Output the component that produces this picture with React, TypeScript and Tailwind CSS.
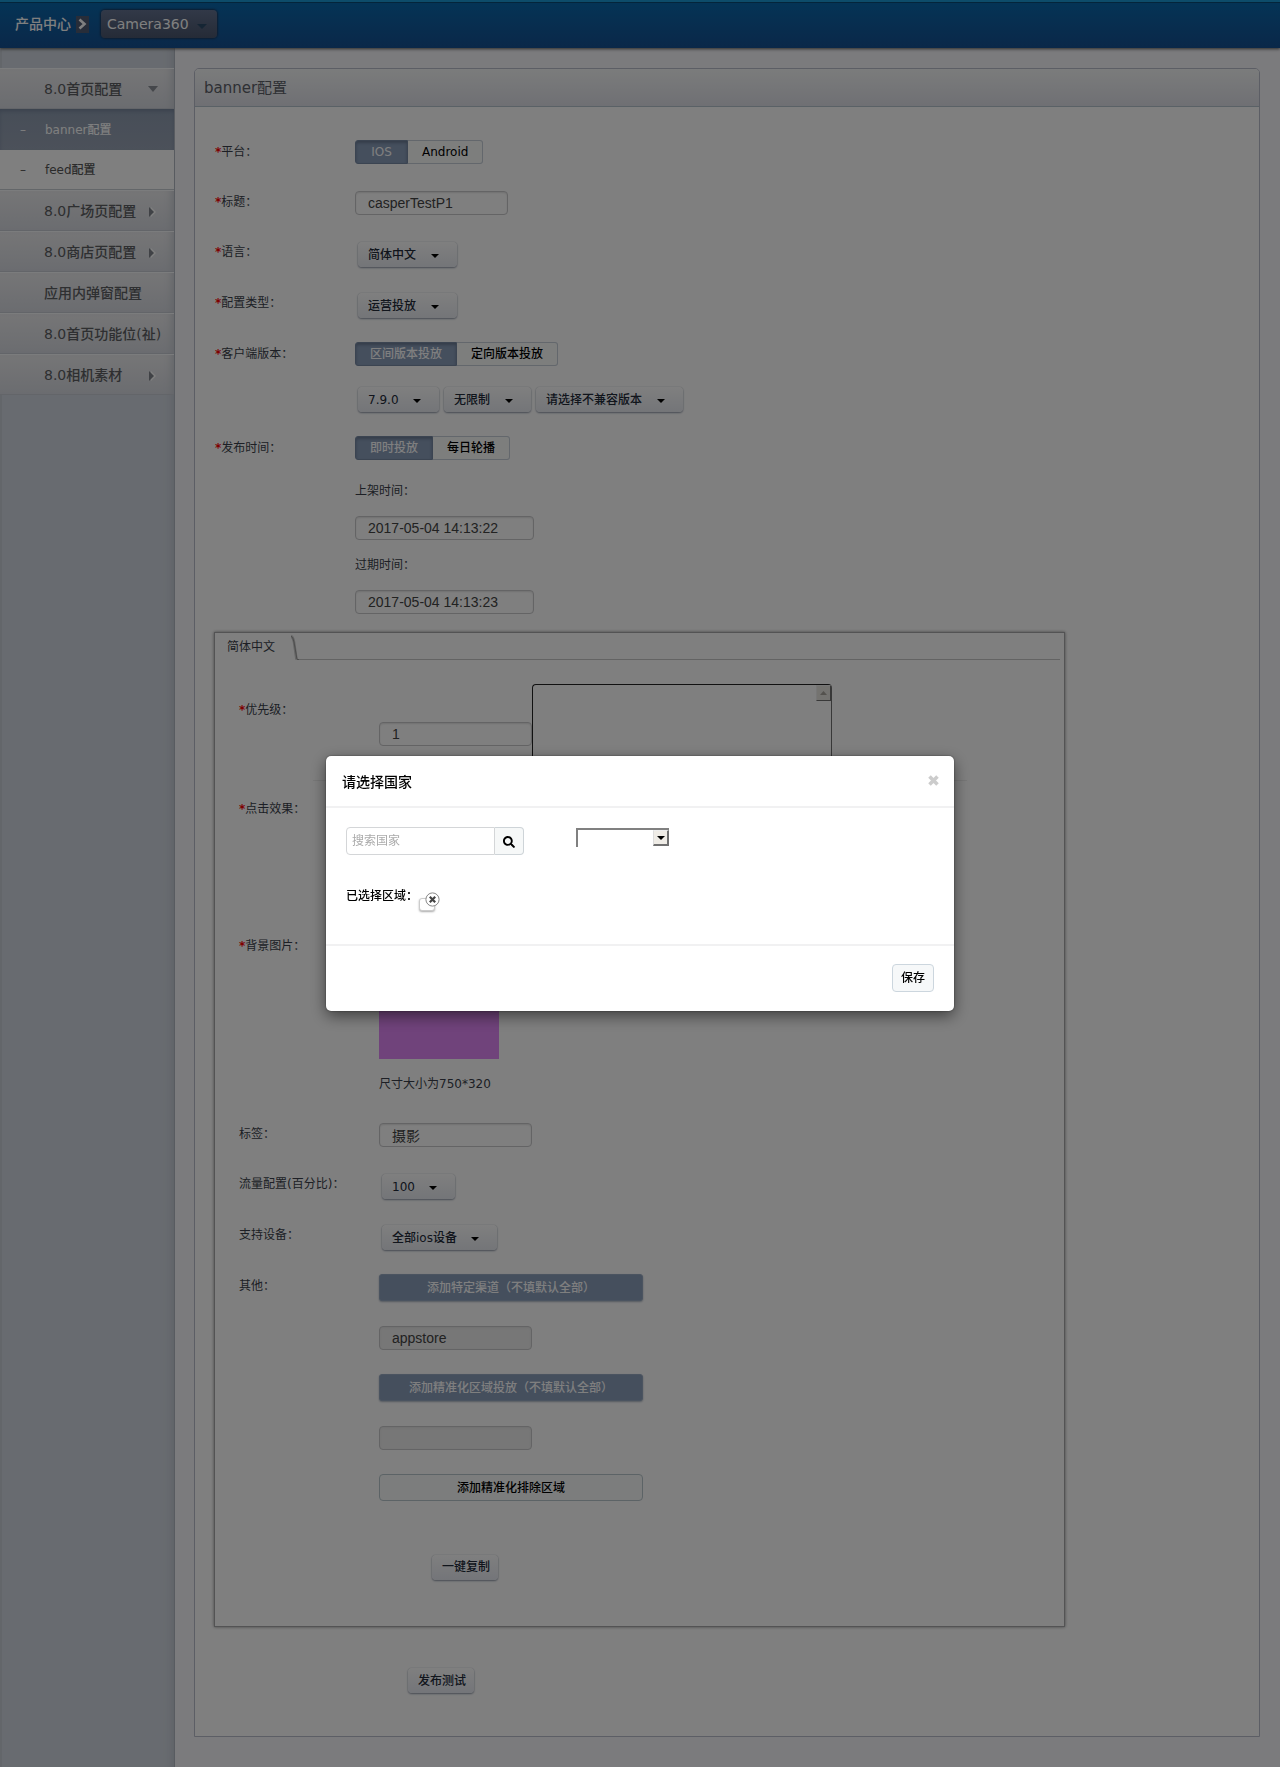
import { useId } from "react";
import type { ReactNode } from "react";
import { FaSearch } from "react-icons/fa";

const noop = () => {};

function Caret({ className = "" }: { className?: string }) {
  return (
    <svg width="8" height="4" viewBox="0 0 8 4" aria-hidden="true" className={className}>
      <path d="M0 0h8L4 4z" fill="currentColor" />
    </svg>
  );
}

function DropDown({ value, label }: { value: string; label: string }) {
  return (
    <div className="relative mt-[2px] mr-[2px] ml-[3px] flex w-fit">
      <select
        aria-label={label}
        className="h-[25px] cursor-pointer appearance-none rounded-[4px] bg-linear-to-b from-white to-[#e8ebf1] pr-[40px] pl-[10px] text-[12px] font-medium text-[#222a38] shadow-[0_0_1px_#a4abb8,0_1px_2px_#8e97a6]"
      >
        <option>{value}</option>
      </select>
      <Caret className="pointer-events-none absolute top-[12px] right-[18px] text-black" />
    </div>
  );
}

function Toggle({ on, off }: { on: string; off: string }) {
  return (
    <div className="flex h-6 text-[12px] font-medium">
      <button
        type="button"
        aria-pressed="true"
        className="min-w-[53px] rounded-l-[3px] border border-[#7688a2] bg-[#8a9ebb] px-[14px] text-white shadow-[inset_0_2px_3px_#6a7a92]"
      >
        {on}
      </button>
      <button
        type="button"
        aria-pressed="false"
        className="rounded-r-[3px] border border-l-0 border-[#c6ced8] bg-[#fafcfb] px-[14px] text-black"
      >
        {off}
      </button>
    </div>
  );
}

function TextBox({
  value,
  wide,
  off,
  label,
  id,
}: {
  value: string;
  wide?: boolean;
  off?: boolean;
  label?: string;
  id?: string;
}) {
  return (
    <input
      type="text"
      id={id}
      aria-label={label}
      value={value}
      onChange={noop}
      disabled={off}
      className={`block h-6 rounded-[4px] border border-[#c8c8ca] px-3 font-['Liberation_Sans','Noto_Sans_CJK_SC',sans-serif] text-[14px] text-[#444] shadow-[inset_0_1px_2px_#e2e2e2] ${
        wide ? "w-[179px]" : "w-[153px]"
      } ${off ? "bg-[#eee]" : "bg-white"}`}
    />
  );
}

function Star() {
  return <span className="font-bold text-[#f00]">*</span>;
}

function Row({
  label,
  required,
  htmlFor,
  children,
}: {
  label: string;
  required?: boolean;
  htmlFor?: string;
  children?: ReactNode;
}) {
  return (
    <div className="mb-6 flex min-h-[26px]">
      <label htmlFor={htmlFor} className="w-[140px] shrink-0 pt-[2px] text-[12px] leading-5">
        {required && <Star />}
        {label}：
      </label>
      <div>{children}</div>
    </div>
  );
}

function GlossButton({ children }: { children: ReactNode }) {
  return (
    <button
      type="button"
      className="h-[25px] rounded-[4px] bg-linear-to-b from-white to-[#e8ebf3] pr-2 pl-[10px] text-[12px] font-medium text-[#222a38] shadow-[0_0_1px_#a4abb8,0_1px_2px_#8e97a6]"
    >
      {children}
    </button>
  );
}

function BlueButton({ children }: { children: ReactNode }) {
  return (
    <button
      type="button"
      className="block h-[27px] w-[264px] rounded-[3px] border border-[#96a8c0] bg-[#8a9ebb] text-center text-[12px] font-medium text-white shadow-[0_1px_2px_#a8b2c0]"
    >
      {children}
    </button>
  );
}

type Arrow = "down" | "right" | "none";

function MenuItem({ text, arrow }: { text: string; arrow: Arrow }) {
  return (
    <a
      href="#"
      className="flex h-[41px] items-center border-t border-[#f6f8fa] bg-linear-to-b from-[#ececee] to-[#d6d9e0] pl-11 text-[14px] font-medium whitespace-nowrap text-[#5c5e62] shadow-[inset_-8px_0_8px_-6px_#c4c8d0,inset_0_-1px_0_#c6cad2]"
    >
      <span className={arrow === "none" ? "" : "w-[104px]"}>{text}</span>
      {arrow === "down" && (
        <svg width="10" height="6" viewBox="0 0 10 6" aria-hidden="true">
          <path d="M0 0h10L5 6z" fill="#8a8f96" />
        </svg>
      )}
      {arrow === "right" && (
        <svg width="8" height="10" viewBox="0 0 8 10" aria-hidden="true" className="mt-[2px] ml-px">
          <path d="M2 0l5 5-5 5z" fill="#fff" />
          <path d="M0 0l5 5-5 5z" fill="#80858c" />
        </svg>
      )}
    </a>
  );
}

function Sidebar() {
  return (
    <nav className="w-[175px] shrink-0 border-r border-[#b0b6c0] bg-[#d1d7e0] pt-5 shadow-[inset_2px_0_0_#c6ccd4,inset_-8px_0_8px_-6px_#bcc2cc]">
      <MenuItem text="8.0首页配置" arrow="down" />
      <a
        href="#"
        className="flex h-[41px] items-center bg-linear-to-b from-[#8e9cb0] to-[#98a2b4] text-[12px] font-medium text-white shadow-[inset_0_3px_4px_-1px_#74829a]"
      >
        <span className="w-[45px] pl-5">–</span>
        banner配置
      </a>
      <a
        href="#"
        className="flex h-10 items-center border-b border-[#c6ccd2] bg-white text-[12px] font-medium text-[#555]"
      >
        <span className="w-[45px] pl-5">–</span>
        feed配置
      </a>
      <MenuItem text="8.0广场页配置" arrow="right" />
      <MenuItem text="8.0商店页配置" arrow="right" />
      <MenuItem text="应用内弹窗配置" arrow="none" />
      <MenuItem text="8.0首页功能位(祉)" arrow="none" />
      <MenuItem text="8.0相机素材" arrow="right" />
    </nav>
  );
}

function TopBar() {
  return (
    <header className="relative z-10 flex h-12 items-center border-t-2 border-[#1a98d4] bg-linear-to-b from-[#0868ac] to-[#145092] pb-[2px] pl-[15px] shadow-[inset_0_1px_0_#084a76,0_1px_3px_#555]">
      <span className="text-[14px] font-medium text-white">产品中心</span>
      <span className="ml-[5px] flex h-[17px] w-[13px] items-center justify-center bg-[#4e5a72]">
        <svg width="9" height="12" viewBox="0 0 9 12" aria-hidden="true">
          <path d="M1.500 1.500L6.500 6L1.500 10.500" fill="none" stroke="#fff" strokeWidth="2.600" />
        </svg>
      </span>
      <div className="relative ml-3 flex">
        <select
          aria-label="产品"
          className="h-7 appearance-none rounded-[4px] bg-linear-to-b from-[#647290] to-[#4a566e] pr-[28px] pl-[6px] text-[14px] text-white shadow-[0_0_2px_1px_#1a3a60]"
        >
          <option>Camera360</option>
        </select>
        <svg
          width="10"
          height="5"
          viewBox="0 0 10 5"
          aria-hidden="true"
          className="pointer-events-none absolute top-[14px] right-[10px]"
        >
          <path d="M0 0h10L5 5z" fill="#2a4a68" />
        </svg>
      </div>
    </header>
  );
}

function LanguagePanel() {
  const priority = useId();
  const tag = useId();
  return (
    <section className="mt-[18px] ml-[19px] w-4/5 border border-[#a6a6a8] pb-[46px] shadow-[0_0_3px_#888]">
      <div className="flex h-[27px]">
        <button type="button" className="pr-4 pl-3 text-[12px] text-[#3a3f4a]">
          简体中文
        </button>
        <svg width="8" height="27" viewBox="0 0 8 27" aria-hidden="true">
          <path d="M0 3Q2 4 3 9L5.500 26.500" fill="none" stroke="#cccccc" strokeWidth="2.600" />
          <path d="M0 3Q2 4 3 9L6 26.500H8" fill="none" stroke="#9a9a9a" strokeWidth="1" />
        </svg>
        <span className="mr-1 grow border-b border-[#c6c6c6]" />
      </div>

      <div className="pt-6 pl-6">
        <div className="flex pb-5">
          <label htmlFor={priority} className="w-[140px] shrink-0 pt-4 text-[12px] leading-5">
            <Star />
            优先级：
          </label>
          <div className="pt-[38px]">
            <TextBox id={priority} value="1" />
          </div>
          <div className="relative h-[76px] w-[300px] rounded-[4px] border border-[#222] border-r-[#707070] bg-white">
            <textarea aria-label="备注" className="block h-full w-full resize-none bg-transparent" />
            <button
              type="button"
              aria-label="向上滚动"
              className="absolute top-0 right-0 flex h-4 w-[15px] items-center justify-center border border-t-[#eee] border-r-[#707070] border-b-[#707070] border-l-[#eee] bg-[#e8e6e0]"
            >
              <svg width="7" height="4" viewBox="0 0 7 4" aria-hidden="true">
                <path d="M0 4L3.500 0L7 4z" fill="#a8a49c" />
              </svg>
            </button>
          </div>
        </div>
        <hr className="mr-[97px] ml-[74px] border-[#eee]" />
        <div className="pt-[18px] text-[12px] leading-5">
          <p>
            <Star />
            点击效果：
          </p>
          <p className="mt-[117px]">
            <Star />
            背景图片：
          </p>
        </div>
        <div className="mt-[52px] mb-[28px] ml-[140px]">
          <div className="h-[51px] w-[120px] bg-[#e086f6]" role="img" aria-label="背景图片" />
          <p className="mt-[15px] text-[12px] leading-5">尺寸大小为750*320</p>
        </div>
        <Row label="标签" htmlFor={tag}>
          <div className="pt-px">
            <TextBox id={tag} value="摄影" />
          </div>
        </Row>
        <Row label="流量配置(百分比)">
          <DropDown label="流量配置(百分比)" value="100" />
        </Row>
        <Row label="支持设备">
          <DropDown label="支持设备" value="全部ios设备" />
        </Row>
        <Row label="其他">
          <BlueButton>添加特定渠道（不填默认全部）</BlueButton>
          <div className="mt-[25px] mb-6">
            <TextBox label="渠道" value="appstore" off />
          </div>
          <BlueButton>添加精准化区域投放（不填默认全部）</BlueButton>
          <div className="mt-[25px] mb-6">
            <TextBox label="区域" value="" off />
          </div>
          <button
            type="button"
            className="block h-[27px] w-[264px] rounded-[4px] border border-[#b8c6cc] bg-[#f8fbfa] text-center text-[12px] font-medium text-black"
          >
            添加精准化排除区域
          </button>
        </Row>
        <div className="mt-[53px] ml-[193px]">
          <GlossButton>一键复制</GlossButton>
        </div>
      </div>
    </section>
  );
}

function ConfigForm() {
  const title = useId();
  return (
    <form onSubmit={(e) => e.preventDefault()} className="pt-[33px] pb-[43px] text-[#3a3f4a]">
      <div className="pl-5">
        <Row label="平台" required>
          <Toggle on="IOS" off="Android" />
        </Row>
        <Row label="标题" required htmlFor={title}>
          <div className="pt-px">
            <TextBox id={title} value="casperTestP1" />
          </div>
        </Row>
        <Row label="语言" required>
          <DropDown label="语言" value="简体中文" />
        </Row>
        <Row label="配置类型" required>
          <DropDown label="配置类型" value="运营投放" />
        </Row>
        <Row label="客户端版本" required>
          <Toggle on="区间版本投放" off="定向版本投放" />
          <div className="mt-[19px] flex">
            <DropDown label="最低版本" value="7.9.0" />
            <DropDown label="最高版本" value="无限制" />
            <DropDown label="不兼容版本" value="请选择不兼容版本" />
          </div>
        </Row>
        <div className="flex">
          <p className="w-[140px] shrink-0 pt-[2px] text-[12px] leading-5">
            <Star />
            发布时间：
          </p>
          <div className="text-[12px] leading-5">
            <Toggle on="即时投放" off="每日轮播" />
            <p className="mt-[21px] mb-[15px]">上架时间：</p>
            <TextBox label="上架时间" value="2017-05-04 14:13:22" wide />
            <p className="mt-[15px] mb-[15px]">过期时间：</p>
            <TextBox label="过期时间" value="2017-05-04 14:13:23" wide />
          </div>
        </div>
      </div>
      <LanguagePanel />
      <div className="mt-[41px] ml-[213px]">
        <GlossButton>发布测试</GlossButton>
      </div>
    </form>
  );
}

function CountryDialog() {
  return (
    <div className="fixed inset-0 z-20 flex items-center justify-center bg-black/50">
      <div
        role="dialog"
        aria-label="请选择国家"
        className="w-[628px] rounded-[5px] bg-white text-[12px] text-black shadow-[0_5px_15px_rgba(0,0,0,0.5),0_0_2px_rgba(0,0,0,0.5)]"
      >
        <div className="flex h-[52px] items-center justify-between border-b-2 border-[#f1f1f2] pt-[2px] pr-[15px] pl-4">
          <h2 className="text-[14px] font-medium">请选择国家</h2>
          <button type="button" aria-label="关闭" className="pb-1">
            <svg width="11" height="11" viewBox="0 0 11 11" aria-hidden="true">
              <path d="M1.500 1.500l8 8M9.500 1.500l-8 8" stroke="#ccc" strokeWidth="3.600" />
            </svg>
          </button>
        </div>
        <div className="h-[136px] px-5 pt-[19px]">
          <div className="flex items-start">
            <div className="flex h-7 w-[178px]">
              <input
                type="text"
                aria-label="搜索国家"
                placeholder="搜索国家"
                className="w-[149px] rounded-l-[4px] border border-[#d4d6d8] px-[5px] text-[12px] placeholder:text-[#aaa]"
              />
              <button
                type="button"
                aria-label="搜索"
                className="flex grow items-center justify-center rounded-r-[4px] border border-l-0 border-[#ced4d8] bg-[#f6f8f8] pt-px"
              >
                <FaSearch size={12} />
              </button>
            </div>
            <div className="relative mt-px ml-[52px] h-[19px] w-[93px]">
              <select
                aria-label="国家"
                className="block h-full w-full appearance-none border-t-2 border-l-2 border-[#808080] bg-white"
              >
                <option></option>
              </select>
              <span className="pointer-events-none absolute top-[2px] right-0 flex h-4 w-4 items-center justify-center border-t border-r-2 border-b-2 border-l border-t-[#eee] border-r-[#707070] border-b-[#707070] border-l-[#ddd] bg-[#efece6]">
                <Caret />
              </span>
            </div>
          </div>
          <div className="flex pt-[31px]">
            <p className="mr-px leading-5 font-medium">已选择区域：</p>
            <span className="relative mt-3 h-[13px] w-[16px] rounded-[3px] border border-[#ccc] bg-white shadow-[0_1px_2px_#aaa]">
              <button type="button" aria-label="移除" className="absolute -top-[7px] -right-[6px]">
                <svg width="15" height="15" viewBox="0 0 15 15" aria-hidden="true">
                  <circle cx="7.500" cy="7.500" r="6.600" fill="#fff" stroke="#888" strokeWidth="1" />
                  <path d="M4.800 4.800l5.400 5.400M10.200 4.800l-5.400 5.400" stroke="#444" strokeWidth="2.200" />
                </svg>
              </button>
            </span>
          </div>
        </div>
        <div className="flex h-[67px] items-start justify-end border-t-2 border-[#f1f1f2] px-5 pt-[18px]">
          <button
            type="button"
            className="h-7 w-[42px] rounded-[4px] border border-[#ccd6de] bg-[#f6f8f9] text-[12px] font-medium"
          >
            保存
          </button>
        </div>
      </div>
    </div>
  );
}

export default function App() {
  return (
    <div className="flex min-h-screen flex-col bg-[#f6f6fa] font-['DejaVu_Sans','Noto_Sans_CJK_SC',sans-serif]">
      <TopBar />
      <div className="flex grow">
        <Sidebar />
        <main className="min-w-0 grow pt-5 pr-5 pb-[30px] pl-[19px]">
          <section className="rounded-t-[5px] border border-[#b8bccb] bg-white">
            <h1 className="flex h-[38px] items-center rounded-t-[4px] border-b border-[#b4c2cc] bg-linear-to-b from-[#f6f8f8] to-[#dfe0e8] pt-px pl-[9px] text-[15px] text-[#5c6068]">
              banner配置
            </h1>
            <ConfigForm />
          </section>
        </main>
      </div>
      <CountryDialog />
    </div>
  );
}
